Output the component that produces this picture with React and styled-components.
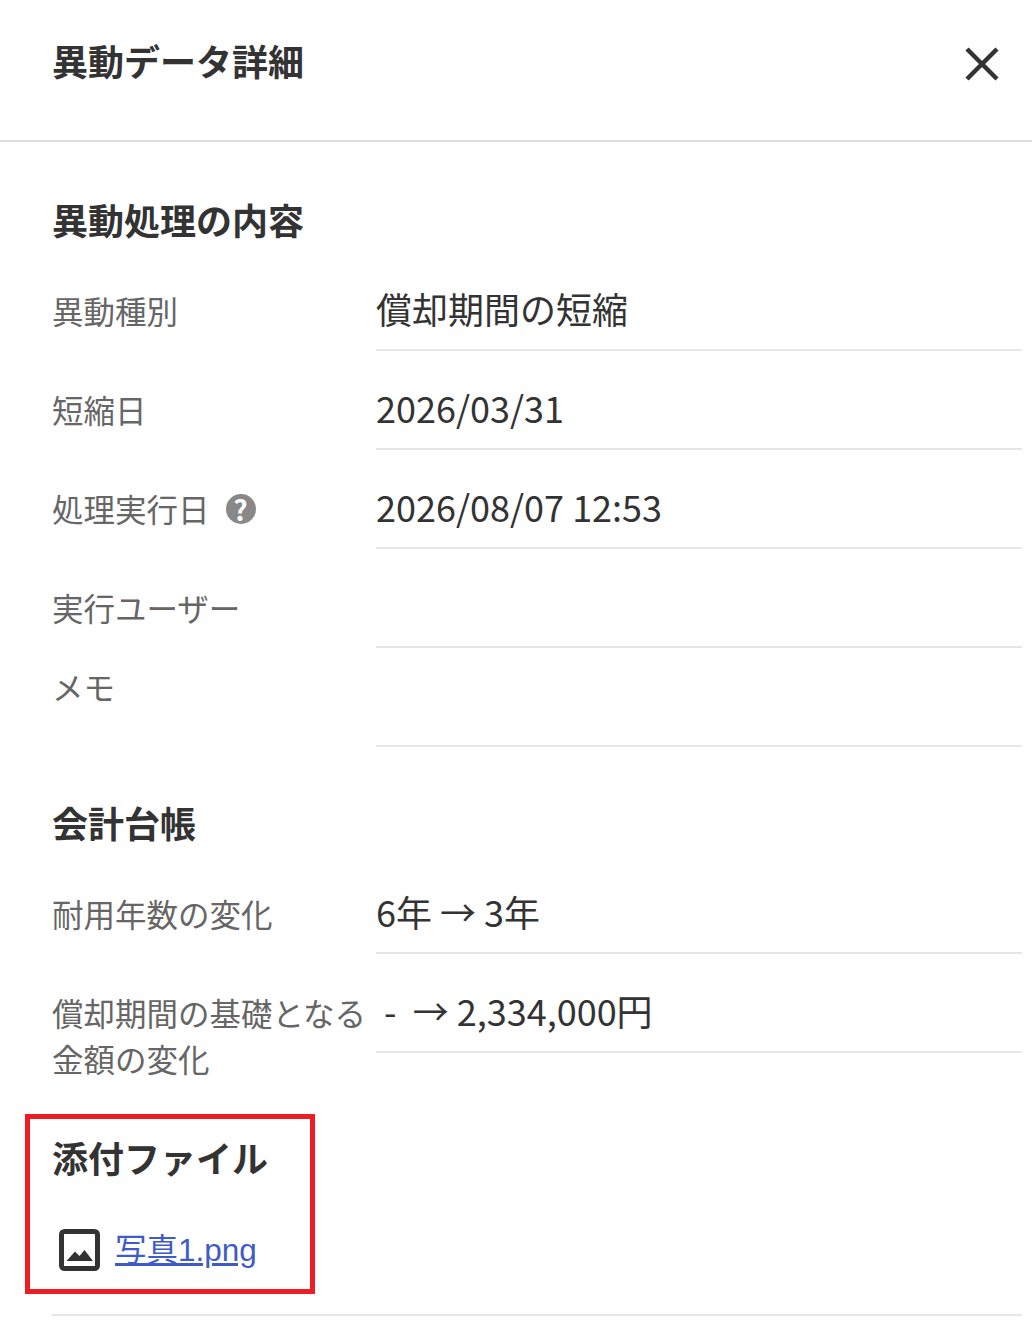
import React from "react";
import styled, { createGlobalStyle } from "styled-components";

const GlobalStyle = createGlobalStyle`
  html, body {
    margin: 0;
    padding: 0;
    background: #fff;
  }
  body {
    font-family: "Noto Sans CJK JP", "Noto Sans", sans-serif;
    color: #333;
  }
`;

const Panel = styled.div`
  width: 1032px;
  height: 1333px;
  overflow: hidden;
`;

const Header = styled.header`
  padding: 0 33px 16px 52px;
  height: 124px;
  display: flex;
  align-items: center;
  justify-content: space-between;
  border-bottom: 2px solid #ddd;
`;

const Title = styled.h1`
  margin: 0 0 4px;
  font-size: 36px;
  line-height: 50px;
  font-weight: 700;
`;

const CloseButton = styled.button`
  display: flex;
  margin-top: 4px;
  padding: 0;
  border: 0;
  background: none;
  color: #333;
`;

const Body = styled.div`
  padding: 54px 10px 0 52px;
`;

const SectionTitle = styled.h2`
  margin: ${(p) => p.$top || 0}px 0 ${(p) => p.$bottom || 10}px;
  font-size: 36px;
  line-height: 46px;
  font-weight: 700;
`;

const Row = styled.div`
  display: grid;
  grid-template-columns: 324px 646px;
`;

const Label = styled.div`
  padding-top: ${(p) => (p.$raised ? 15 : 35)}px;
  font-size: 31.5px;
  line-height: 46px;
  color: #666;
  display: flex;
  align-items: flex-start;
  gap: 16px;
`;

const Value = styled.div`
  padding-top: 31px;
  box-sizing: border-box;
  height: 99px;
  font-size: 36px;
  line-height: 50px;
  white-space: pre;
  border-bottom: 2px solid #e6e6e6;
`;

const HelpBadge = styled.span`
  width: 30px;
  height: 30px;
  margin-top: 9px;
  border-radius: 50%;
  background: #888;
  color: #fff;
  font-size: 28px;
  line-height: 30px;
  font-weight: 700;
  text-align: center;
`;

const AttachBox = styled.section`
  width: 290px;
  height: 180px;
  margin: 33px 0 0 -27px;
  padding: 15px 0 0 22px;
  box-sizing: border-box;
  border: 5px solid #ee1c25;
`;

const FileRow = styled.div`
  display: flex;
  align-items: center;
  gap: 15px;
  margin-left: 7px;
`;

const FileLink = styled.a`
  font-family: "Liberation Sans", "Noto Sans CJK JP", sans-serif;
  font-size: 31.5px;
  line-height: 46px;
  color: #3f5bc8;
  text-decoration: underline;
`;

const BottomLine = styled.div`
  width: 970px;
  margin-top: 20px;
  border-bottom: 2px solid #e6e6e6;
`;

const ImageIcon = () => (
  <svg width="41" height="42" viewBox="0 0 41 42" aria-hidden="true">
    <rect x="2.5" y="2.5" width="36" height="37" rx="3" fill="none" stroke="#333" strokeWidth="5" />
    <path d="M7.5 32 L16 22.5 L20.5 27 L25.5 21 L34 32 Z" fill="#333" />
  </svg>
);

const CloseIcon = () => (
  <svg width="34" height="34" viewBox="0 0 34 34" aria-hidden="true">
    <path d="M2 2 L32 32 M32 2 L2 32" stroke="#333" strokeWidth="4.5" fill="none" />
  </svg>
);

const processRows = [
  { label: "異動種別", value: "償却期間の短縮" },
  { label: "短縮日", value: "2026/03/31" },
  { label: "処理実行日", value: "2026/08/07 12:53", help: true },
  { label: "実行ユーザー", value: "" },
  { label: "メモ", value: "", raised: true },
];

const ledgerRows = [
  { label: "耐用年数の変化", value: "6年 → 3年" },
  { label: "償却期間の基礎となる金額の変化", value: " -  → 2,334,000円" },
];

const App = () => (
  <Panel>
    <GlobalStyle />
    <Header>
      <Title>異動データ詳細</Title>
      <CloseButton aria-label="閉じる">
        <CloseIcon />
      </CloseButton>
    </Header>
    <Body>
      <SectionTitle>異動処理の内容</SectionTitle>
      {processRows.map((row) => (
        <Row key={row.label}>
          <Label $raised={row.raised}>
            {row.label}
            {row.help && <HelpBadge>?</HelpBadge>}
          </Label>
          <Value>{row.value}</Value>
        </Row>
      ))}
      <SectionTitle $top={52}>会計台帳</SectionTitle>
      {ledgerRows.map((row) => (
        <Row key={row.label}>
          <Label>{row.label}</Label>
          <Value>{row.value}</Value>
        </Row>
      ))}
      <AttachBox>
        <SectionTitle $bottom={47}>添付ファイル</SectionTitle>
        <FileRow>
          <ImageIcon />
          <FileLink href="#">写真1.png</FileLink>
        </FileRow>
      </AttachBox>
      <BottomLine />
    </Body>
  </Panel>
);

export default App;
